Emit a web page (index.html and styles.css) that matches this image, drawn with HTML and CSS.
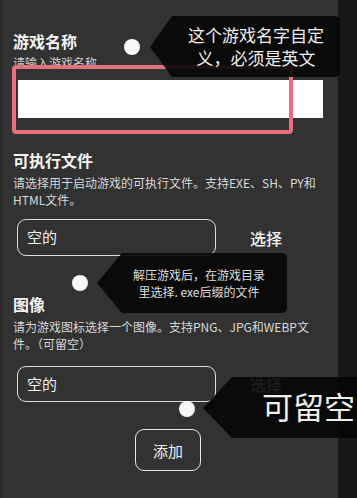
FILE: index.html
```html
<!DOCTYPE html>
<html lang="zh-CN">
<head>
<meta charset="utf-8">
<title>添加游戏</title>
<link rel="stylesheet" href="styles.css">
</head>
<body>
<div class="screen">
  <main class="form">
    <section class="field f-name">
      <h2 class="label">游戏名称</h2>
      <p class="hint">请输入游戏名称</p>
      <div class="text-input"></div>
    </section>
    <section class="field f-exe">
      <h2 class="label">可执行文件</h2>
      <p class="hint">请选择用于启动游戏的可执行文件。支持EXE、SH、PY和<br>HTML文件。</p>
      <div class="picker">
        <div class="path-box">空的</div>
        <span class="choose">选择</span>
      </div>
    </section>
    <section class="field f-img">
      <h2 class="label">图像</h2>
      <p class="hint">请为游戏图标选择一个图像。支持PNG、JPG和WEBP文<br>件。（可留空）</p>
      <div class="picker picker-img">
        <div class="path-box">空的</div>
        <span class="choose">选择</span>
      </div>
    </section>
    <div class="actions">
      <button class="add">添加</button>
    </div>
  </main>
  <div class="side"></div>

  <div class="mark"></div>

  <span class="dot dot-1"></span>
  <div class="tip tip-1">
    <svg class="tip-bg" width="190" height="61" viewBox="0 0 190 61"><path d="M0 31 L22 0 H184 Q190 0 190 6 V55 Q190 61 184 61 H22 Z"/></svg>
    <p class="tip-text">这个游戏名字自定<br>义，必须是英文</p>
  </div>

  <span class="dot dot-2"></span>
  <div class="tip tip-2">
    <svg class="tip-bg" width="190" height="60" viewBox="0 0 190 60"><path d="M0 30 L25 0 H184 Q190 0 190 6 V54 Q190 60 184 60 H25 Z"/></svg>
    <p class="tip-text">解压游戏后，在游戏目录<br>里选择. exe后缀的文件</p>
  </div>

  <span class="dot dot-3"></span>
  <div class="tip tip-3">
    <svg class="tip-bg" width="154" height="61" viewBox="0 0 154 61"><path d="M0 31 L29 0 H154 V61 H29 Z"/></svg>
    <p class="tip-text">可留空</p>
  </div>
</div>
</body>
</html>
```
FILE: styles.css
```css
* { box-sizing: border-box; }
html, body { margin: 0; padding: 0; }
body {
  width: 357px;
  height: 498px;
  overflow: hidden;
  background: #171717;
  font-family: "Noto Sans CJK SC", "Noto Sans", sans-serif;
  color: #f0f0f0;
}
.screen {
  position: relative;
  width: 357px;
  height: 498px;
  display: flex;
}
.form {
  width: 338px;
  height: 498px;
  background: #323232;
  border-left: 3px solid #2a2a2a;
  padding: 31px 0 0 10px;
}
.side {
  flex: 1;
  background: #171717;
}
.field { margin: 0; }
.label {
  margin: 0;
  font-size: 16px;
  line-height: 20px;
  font-weight: 700;
  color: #f4f4f4;
}
.hint {
  margin: 4px 0 0;
  font-size: 12px;
  line-height: 17px;
  color: #d8d8d8;
  white-space: nowrap;
}
.f-name .hint { line-height: 16px; color: #cfcfcf; }
.text-input {
  margin: 9px 0 0 5px;
  width: 305px;
  height: 38px;
  background: #fff;
}
.f-exe { margin-top: 32px; }
.f-img { margin-top: 38px; }
.picker {
  display: flex;
  align-items: center;
  margin: 11px 0 0 4px;
  gap: 34px;
}
.picker-img { margin-top: 14px; }
.path-box {
  width: 199px;
  height: 37px;
  border: 1.5px solid #dedede;
  border-radius: 9px;
  padding-left: 9px;
  font-size: 15px;
  line-height: 34px;
  color: #eeeeee;
}
.picker-img .path-box { height: 36px; line-height: 33px; }
.choose {
  font-size: 16px;
  font-weight: 500;
  color: #f2f2f2;
}
.actions {
  margin-top: 27px;
  padding-left: 122px;
}
.add {
  width: 66px;
  height: 42px;
  background: transparent;
  border: 1.5px solid #e6e6e6;
  border-radius: 9px;
  font-family: inherit;
  font-size: 15px;
  color: #f2f2f2;
  padding: 0;
}

/* annotations */
.mark {
  position: absolute;
  left: 12px;
  top: 65px;
  width: 281px;
  height: 69px;
  border: 4px solid #e8707a;
  border-radius: 4px;
}
.dot {
  position: absolute;
  width: 16px;
  height: 16px;
  border-radius: 50%;
  background: #f7f7f7;
}
.dot-1 { left: 124px; top: 39px; }
.dot-2 { left: 72px; top: 275px; }
.dot-3 { left: 179px; top: 401px; }
.tip { position: absolute; }
.tip-bg { position: absolute; left: 0; top: 0; }
.tip-bg path { fill: rgba(6, 6, 6, 0.9); }
.tip-text {
  position: relative;
  margin: 0;
  text-align: center;
  white-space: nowrap;
  color: #eeeeee;
}
.tip-1 { left: 150px; top: 16px; width: 190px; height: 61px; }
.tip-1 .tip-text {
  padding: 7px 0 0 22px;
  font-size: 17px;
  line-height: 23px;
}
.tip-2 { left: 97px; top: 253px; width: 190px; height: 60px; }
.tip-2 .tip-text {
  padding: 13px 0 0 14px;
  font-size: 12px;
  line-height: 17px;
  color: #dddddd;
}
.tip-3 { left: 203px; top: 377px; width: 154px; height: 61px; }
.tip-3 .tip-text {
  text-align: left;
  padding: 9px 0 0 59px;
  font-size: 31px;
  line-height: 40px;
  color: #f0f0f0;
}
```
